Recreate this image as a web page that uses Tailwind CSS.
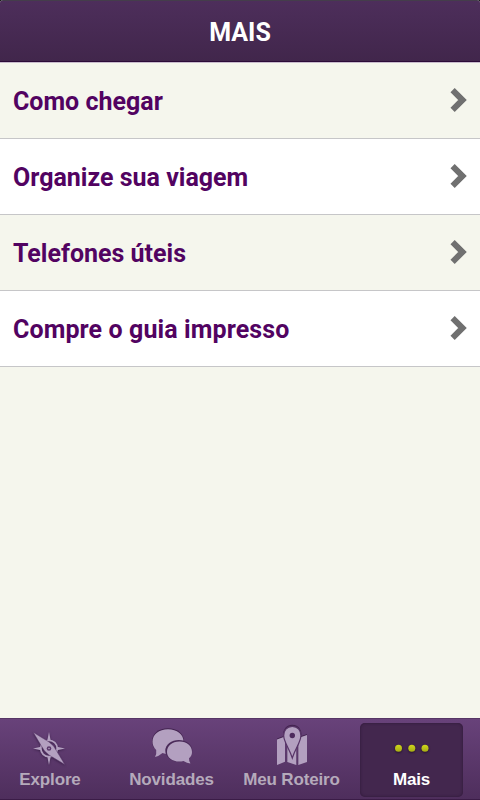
<!DOCTYPE html>
<html lang="pt-BR">
  <head>
    <meta charset="UTF-8" />
    <meta name="viewport" content="width=device-width, initial-scale=1.0" />
    <title>Mais</title>
    <script src="https://cdn.jsdelivr.net/npm/@tailwindcss/browser@4"></script>
  </head>
  <body class="bg-black">
    <div class="flex flex-col w-[480px] h-[800px] overflow-hidden rounded-t-[3px] bg-[#f5f6ed] font-[Roboto,sans-serif]">
      <header
        class="flex items-center justify-center h-[63px] shrink-0 border-t border-t-[#443d4b] border-b border-b-[#c9bccd] bg-linear-to-b from-[#4d2e5b] to-[#41264b] shadow-[inset_0_-1px_0_#2c0b38]"
      >
        <h1 class="pt-[2px] text-[25px] leading-[30px] font-bold text-white">MAIS</h1>
      </header>

      <main class="grow">
        <ul class="text-[25px] font-bold text-[#520361]">
          <li class="flex items-center justify-between h-[76px] pl-[13px] pr-[13px] border-b border-[#c6c6c8]">
            <span class="pt-[2px]">Como chegar</span>
            <svg class="w-[17px] h-[26px] mb-[2px]" viewBox="0 0 17 26" fill="none" stroke="#707070" stroke-width="6"><path d="M2.6 3.2 L12.5 13 L2.6 22.8" /></svg>
          </li>
          <li class="flex items-center justify-between h-[76px] pl-[13px] pr-[13px] border-b border-[#c6c6c8] bg-white">
            <span class="pt-[2px]">Organize sua viagem</span>
            <svg class="w-[17px] h-[26px] mb-[2px]" viewBox="0 0 17 26" fill="none" stroke="#707070" stroke-width="6"><path d="M2.6 3.2 L12.5 13 L2.6 22.8" /></svg>
          </li>
          <li class="flex items-center justify-between h-[76px] pl-[13px] pr-[13px] border-b border-[#c6c6c8]">
            <span class="pt-[2px]">Telefones úteis</span>
            <svg class="w-[17px] h-[26px] mb-[2px]" viewBox="0 0 17 26" fill="none" stroke="#707070" stroke-width="6"><path d="M2.6 3.2 L12.5 13 L2.6 22.8" /></svg>
          </li>
          <li class="flex items-center justify-between h-[76px] pl-[13px] pr-[13px] border-b border-[#c6c6c8] bg-white">
            <span class="pt-[2px] tracking-[0.1px]">Compre o guia impresso</span>
            <svg class="w-[17px] h-[26px] mb-[2px]" viewBox="0 0 17 26" fill="none" stroke="#707070" stroke-width="6"><path d="M2.6 3.2 L12.5 13 L2.6 22.8" /></svg>
          </li>
        </ul>
      </main>

      <nav
        class="flex h-[82px] shrink-0 pt-[4px] border-t border-[#563565] bg-linear-to-b from-[#68427a] to-[#4e2e5c] font-['Liberation_Sans',sans-serif] text-[17px] leading-[20px] tracking-[-0.15px] font-bold text-[#b5aabb] shadow-[inset_0_-1px_0_#3b1c47]"
      >
        <a class="flex flex-col items-center w-[100px] h-[74px]">
          <svg class="w-[40px] h-[44px] mt-px drop-shadow-[0_1px_1px_#3b204a]" viewBox="0 0 40 44" fill="#b3a0c0">
            <circle cx="19" cy="24.5" r="8.2" fill="none" stroke="#b3a0c0" stroke-width="1.800" />
            <path d="M19 8 L20.800 17 H17.200 Z M19 41 L20.800 32 H17.200 Z M3 24.5 L11 22.700 V26.300 Z M35 24.5 L27 22.700 V26.300 Z" />
            <path d="M3.200 8.300 L19 18 Q24 21.500 26 26 L34.800 40.500 L19 31 Q14 27.500 12 23 Z" stroke="#5b386b" stroke-width="0.5" />
            <circle cx="19" cy="24.5" r="2.3" fill="#5b386b" />
            <circle cx="19" cy="24.5" r="0.8" />
          </svg>
          <span class="mt-[2px]">Explore</span>
        </a>
        <a class="flex flex-col items-center w-[103px] h-[74px] ml-[20px]">
          <svg class="w-[44px] h-[44px] mt-px" viewBox="0 0 44 44" fill="#b3a0c0">
            <path fill="#42234f" d="M18 4.200 C27 4.200 34 9.500 34 17 L30 22 L4 24 Q2 21 2 17 C2 9.500 9 4.200 18 4.200 Z" />
            <path d="M18 5.300 C27 5.300 33.500 10.500 33.500 17.500 C33.500 25 27 30 18 30 Q15 30 12.500 29 Q9 32 5 33 Q6.800 30 6.200 26 Q2.500 22.500 2.500 17.500 C2.500 10.500 9 5.300 18 5.300 Z" />
            <ellipse cx="28.8" cy="26.800" rx="13.5" ry="10.900" fill="#4a2a59" />
            <path d="M29.500 17.600 C37 17.600 42 22 42 28 Q42 32 39 34.300 Q38.800 37 40.500 39.500 Q37 39 33.500 36.900 Q31.500 37.600 29.500 37.600 C22 37.600 17 33.500 17 28 C17 22 22 17.600 29.500 17.600 Z" />
          </svg>
          <span class="mt-[2px]">Novidades</span>
        </a>
        <a class="flex flex-col items-center w-[103px] h-[74px] ml-[17px]">
          <svg class="w-[40px] h-[44px] mt-px drop-shadow-[0_-1px_0_#42234f]" viewBox="0 0 40 44" fill="#b3a0c0">
            <path d="M5 15.500 L13 12.500 V37.800 L5 41 Z M15.300 20 L24.300 24 V41 L15.300 38 Z M26.300 14 L35 11 V38 L26.300 41 Z" />
            <path stroke="#583568" stroke-width="1.2" d="M20.300 2.400 C26 2.400 28.900 6.700 28.900 11.500 C28.900 18 23.500 24 20.300 34 C17.100 24 11.700 18 11.700 11.500 C11.700 6.700 14.600 2.400 20.300 2.400 Z" />
            <circle cx="20.300" cy="11.500" r="2.7" fill="#4d2b5d" />
          </svg>
          <span class="mt-[2px] whitespace-nowrap">Meu Roteiro</span>
        </a>
        <a
          class="flex flex-col items-center w-[103px] h-[74px] ml-[17px] rounded-[5px] bg-[#43274e] text-white shadow-[inset_0_0_3px_#2d1737]"
        >
          <svg class="w-[40px] h-[44px] mt-px drop-shadow-[0_1px_1px_#26102f]" viewBox="0 0 40 44">
            <defs>
              <linearGradient id="dot" x1="0" y1="0" x2="0" y2="1">
                <stop offset="0" stop-color="#d0d61b" />
                <stop offset="1" stop-color="#a6ad15" />
              </linearGradient>
            </defs>
            <g fill="url(#dot)">
              <circle cx="6.500" cy="24.300" r="3.5" />
              <circle cx="19.800" cy="24.300" r="3.5" />
              <circle cx="33" cy="24.300" r="3.5" />
            </g>
          </svg>
          <span class="mt-[2px]">Mais</span>
        </a>
      </nav>
    </div>
  </body>
</html>
